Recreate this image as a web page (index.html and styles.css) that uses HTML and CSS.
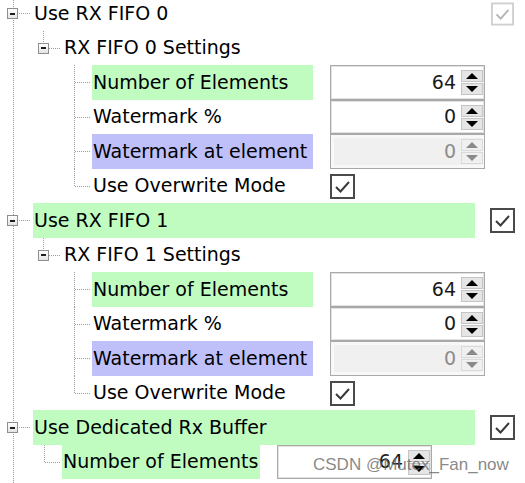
FILE: index.html
```html
<!DOCTYPE html>
<html>
<head>
<meta charset="utf-8">
<title>RX FIFO settings</title>
<link rel="stylesheet" href="styles.css">
</head>
<body>
<div class="tree">
  <div class="row">
    <div class="gut g1"><span class="exp"></span></div>
    <div class="label w1">Use RX FIFO 0</div>
    <span class="chk c1 off"><svg viewBox="0 0 25 25" width="23" height="24"><rect x="1" y="1" width="23" height="23"/><polyline points="6,13 10.5,17.5 19,8"/></svg></span>
  </div>
  <div class="row">
    <div class="gut g2"><span class="exp"></span></div>
    <div class="label">RX FIFO 0 Settings</div>
  </div>
  <div class="row">
    <div class="gut g3"></div>
    <div class="label w3 green">Number of Elements</div>
    <div class="spin"><span class="val">64</span><span class="btns"><span class="btn up"></span><span class="btn dn"></span></span></div>
  </div>
  <div class="row">
    <div class="gut g3"></div>
    <div class="label w3">Watermark %</div>
    <div class="spin"><span class="val">0</span><span class="btns"><span class="btn up"></span><span class="btn dn"></span></span></div>
  </div>
  <div class="row">
    <div class="gut g3"></div>
    <div class="label w3 purple">Watermark at element</div>
    <div class="spin dis"><span class="val">0</span><span class="btns"><span class="btn up"></span><span class="btn dn"></span></span></div>
  </div>
  <div class="row">
    <div class="gut g3 last"></div>
    <div class="label w3">Use Overwrite Mode</div>
    <span class="chk c3"><svg viewBox="0 0 25 25" width="25" height="25"><rect x="1" y="1" width="23" height="23"/><polyline points="6,13 10.5,17.5 19,8"/></svg></span>
  </div>

  <div class="row">
    <div class="gut g1"><span class="exp"></span></div>
    <div class="label w1 green">Use RX FIFO 1</div>
    <span class="chk c1"><svg viewBox="0 0 25 25" width="25" height="25"><rect x="1" y="1" width="23" height="23"/><polyline points="6,13 10.5,17.5 19,8"/></svg></span>
  </div>
  <div class="row">
    <div class="gut g2"><span class="exp"></span></div>
    <div class="label">RX FIFO 1 Settings</div>
  </div>
  <div class="row">
    <div class="gut g3"></div>
    <div class="label w3 green">Number of Elements</div>
    <div class="spin"><span class="val">64</span><span class="btns"><span class="btn up"></span><span class="btn dn"></span></span></div>
  </div>
  <div class="row">
    <div class="gut g3"></div>
    <div class="label w3">Watermark %</div>
    <div class="spin"><span class="val">0</span><span class="btns"><span class="btn up"></span><span class="btn dn"></span></span></div>
  </div>
  <div class="row">
    <div class="gut g3"></div>
    <div class="label w3 purple">Watermark at element</div>
    <div class="spin dis"><span class="val">0</span><span class="btns"><span class="btn up"></span><span class="btn dn"></span></span></div>
  </div>
  <div class="row">
    <div class="gut g3 last"></div>
    <div class="label w3">Use Overwrite Mode</div>
    <span class="chk c3"><svg viewBox="0 0 25 25" width="25" height="25"><rect x="1" y="1" width="23" height="23"/><polyline points="6,13 10.5,17.5 19,8"/></svg></span>
  </div>

  <div class="row">
    <div class="gut g1"><span class="exp"></span></div>
    <div class="label w1 green">Use Dedicated Rx Buffer</div>
    <span class="chk c1"><svg viewBox="0 0 25 25" width="25" height="25"><rect x="1" y="1" width="23" height="23"/><polyline points="6,13 10.5,17.5 19,8"/></svg></span>
  </div>
  <div class="row">
    <div class="gut gl"></div>
    <div class="label wl green">Number of Elements</div>
    <div class="spin"><span class="val">64</span><span class="btns"><span class="btn up"></span><span class="btn dn"></span></span></div>
  </div>
</div>
<div class="wm">CSDN @Mutex_Fan_now</div>
</body>
</html>
```
FILE: styles.css
```css
* { box-sizing: border-box; }
html, body { margin: 0; padding: 0; background: #fff; }
body {
  width: 525px;
  height: 483px;
  overflow: hidden;
  position: relative;
  font-family: "DejaVu Sans", Verdana, sans-serif;
  font-size: 19px;
  color: #000;
  --vd: repeating-linear-gradient(to bottom, #9c9c9c 0 1px, transparent 1px 2px);
  --hd: repeating-linear-gradient(to right, #9c9c9c 0 1px, transparent 1px 2px);
}

.tree {
  margin-top: -4px;
  padding-bottom: 10px;
  background-image: var(--vd);
  background-size: 1px 100%;
  background-position: 13px 0;
  background-repeat: no-repeat;
}

.row { display: flex; align-items: center; white-space: nowrap; }
.row:nth-child(odd) { height: 35px; }
.row:nth-child(even) { height: 34px; }

.gut {
  flex: none;
  align-self: stretch;
  display: flex;
  align-items: center;
  background-repeat: no-repeat;
}
.g1 {
  width: 33px;
  background-image: var(--hd);
  background-size: 12px 1px;
  background-position: 19px 50%;
}
.g1 .exp { margin-left: 7px; }
.g2 {
  width: 63px;
  background-image: var(--vd), var(--hd);
  background-size: 1px 50%, 12px 1px;
  background-position: 43px 0, 49px 50%;
}
.g2 .exp { margin-left: 38px; }
.g3 {
  width: 92px;
  background-image: var(--vd), var(--hd);
  background-size: 1px 100%, 15px 1px;
  background-position: 74px 0, 75px 50%;
}
.g3.last { background-size: 1px 50%, 15px 1px; }
.gl {
  width: 62px;
  background-image: var(--vd), var(--hd);
  background-size: 1px 50%, 15px 1px;
  background-position: 44px 0, 45px 50%;
}

.exp {
  width: 11px;
  height: 11px;
  border: 1px solid #8e8e8e;
  background: linear-gradient(#ffffff, #e4e4e4);
  display: flex;
  align-items: center;
  justify-content: center;
}
.exp::before {
  content: "";
  width: 5px;
  height: 2px;
  background: #1e1e1e;
}

.label {
  flex: none;
  align-self: stretch;
  display: flex;
  align-items: center;
  padding: 0 0 2px 1px;
}
.w1 { width: 442px; }
.w3 { width: 221px; }
.wl { width: 198px; }
.green { background: #c0fcc0; }
.purple { background: #bfbff9; }

.chk { display: flex; flex: none; }
.chk svg { display: block; }
.chk rect { fill: #fff; stroke: #4a4a4a; stroke-width: 2; }
.chk polyline { fill: none; stroke: #3a3a3a; stroke-width: 2; }
.chk.off rect { stroke: #cfcfcf; }
.chk.off polyline { stroke: #b4b4b4; }
.c1 { margin-left: 15px; }
.c1.off { margin-left: 16px; }
.c3 { margin-left: 17px; }

.spin {
  flex: none;
  margin-left: 17px;
  width: 155px;
  align-self: stretch;
  border: 1px solid #a9a9a9;
  box-shadow: inset 0 0 0 1px #e2e2e2;
  background: #fff;
  display: flex;
  align-items: center;
  justify-content: flex-end;
  padding-right: 1px;
}
.val { margin-right: 5px; padding-bottom: 2px; color: #1a1a1a; }
.btns { display: flex; flex-direction: column; gap: 1px; width: 22px; }
.btn {
  height: 12px;
  border: 1px solid #c4c4c4;
  background: #e5e5e5;
  display: flex;
  align-items: center;
  justify-content: center;
}
.btn.up::before {
  content: "";
  border-left: 6px solid transparent;
  border-right: 6px solid transparent;
  border-bottom: 6px solid #000;
}
.btn.dn::before {
  content: "";
  border-left: 6px solid transparent;
  border-right: 6px solid transparent;
  border-top: 6px solid #000;
}
.spin.dis { background: #f0f0f0; box-shadow: inset 0 0 0 3px #f8f8f8; }
.spin.dis .val { color: #8c8c8c; }
.spin.dis .btn { background: #f0f0f0; border-color: #dadada; }
.spin.dis .btn.up::before { border-bottom-color: #8a8a8a; }
.spin.dis .btn.dn::before { border-top-color: #8a8a8a; }

.wm {
  position: absolute;
  left: 313px;
  top: 455px;
  font-family: "Liberation Sans", Arial, sans-serif;
  font-size: 17px;
  color: rgba(105, 105, 105, 0.8);
  white-space: nowrap;
}
```
